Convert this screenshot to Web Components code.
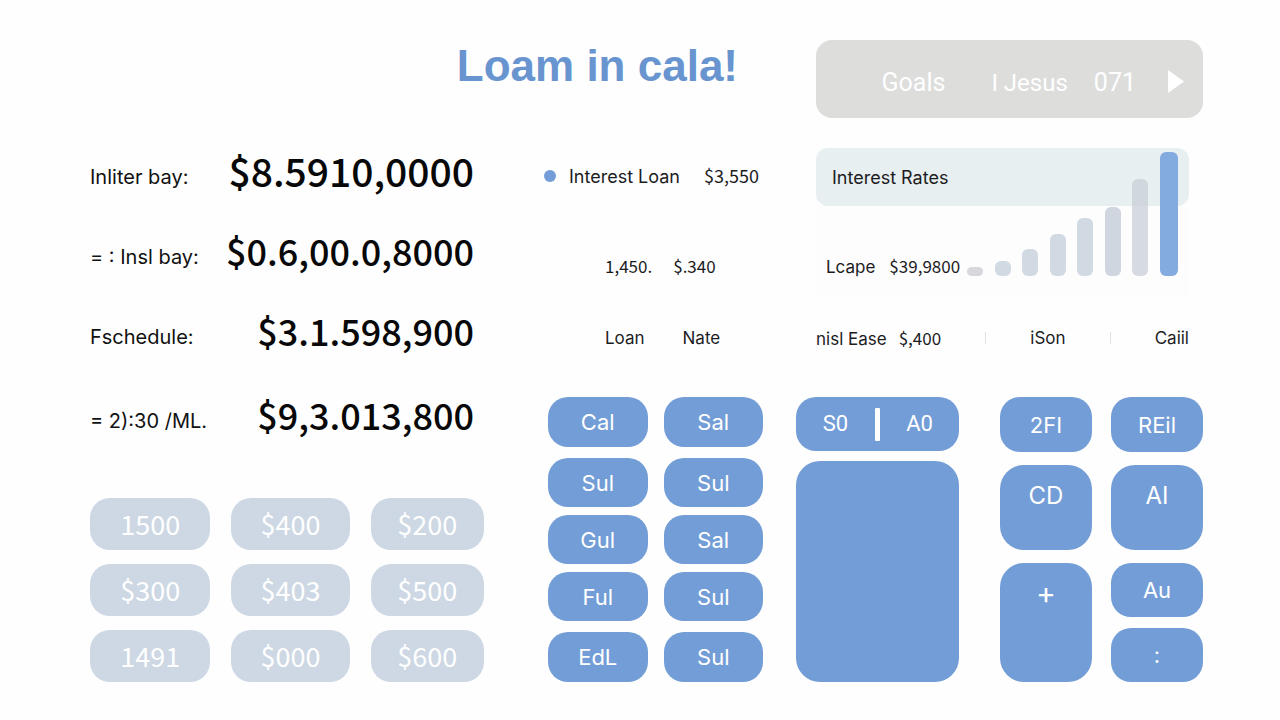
<!DOCTYPE html>
<html lang="en">
<head>
<meta charset="utf-8">
<meta name="viewport" content="width=device-width, initial-scale=1">
<title>Loam in cala!</title>
<style>
  body { margin: 0; background: #fefefe; }
</style>
</head>
<body>
<loan-app></loan-app>
<script>
const define = (name, html) => {
  const template = document.createElement('template');
  template.innerHTML = html;
  customElements.define(name, class extends HTMLElement {
    constructor() {
      super();
      this.attachShadow({ mode: 'open' }).append(template.content.cloneNode(true));
    }
  });
};

/* One labelled amount */
define('loan-figure', `
  <style>
    :host { display: flex; justify-content: space-between; align-items: flex-start; height: 80px; color: #111; white-space: nowrap; font-size: 20px; line-height: 64px; }
    .value { font: 500 36px/50px "Noto Sans CJK JP", sans-serif; color: #080808; }
    :host([large]) .value { font-size: 39px; }
  </style>
  <span class="label"><slot></slot></span>
  <span class="value"><slot name="value"></slot></span>`);

/* Calculator key */
define('calc-key', `
  <style>
    :host { display: block; }
    button {
      display: block; width: 100%; height: 100%; margin: 0; border: 0; border-radius: 20px;
      padding: 0; background: #739dd6; color: #fff; font: 22px/28px Inter, sans-serif; cursor: pointer;
    }
    :host([pale]) button { background: #cdd8e4; font: 27px/32px "Noto Sans CJK JP", sans-serif; }
    :host([tall]) button { border-radius: 24px; font-size: 24px; padding-bottom: 24px; }
    :host([plus]) button { border-radius: 24px; font-size: 30px; padding-bottom: 60px; }
  </style>
  <button type="button"><slot></slot></button>`);

/* Two-part key with a divider */
define('split-key', `
  <style>
    :host { display: grid; grid-template-columns: 1fr 5px 1fr; align-items: center; border-radius: 20px; background: #739dd6; }
    button { border: 0; padding: 0; background: none; color: #fff; font: 22px/28px Roboto, sans-serif; cursor: pointer; }
    i { height: 33px; background: #fff; border-radius: 1px; }
  </style>
  <button type="button"><slot name="first"></slot></button><i></i><button type="button"><slot name="second"></slot></button>`);

define('goal-bar', `
  <style>
    :host { display: block; flex: 0 1 387px; }
    nav { display: flex; align-items: center; justify-content: flex-end; box-sizing: border-box; height: 78px; padding: 8px 19px 0 0; border-radius: 16px; background: #dddddc; }
    button { border: 0; padding: 0; background: none; color: #fff; font: 25px/32px Roboto, sans-serif; white-space: nowrap; cursor: pointer; }
    .user { margin-left: 46px; font-size: 24px; }
    .count { margin-left: 26px; }
    .next { margin: 0 0 4px 32px; }
    svg { display: block; }
  </style>
  <nav aria-label="Goals">
    <button type="button">Goals</button>
    <button type="button" class="user">I Jesus</button>
    <button type="button" class="count">071</button>
    <button type="button" class="next" aria-label="Next"><svg width="16" height="23" viewBox="0 0 16 23"><path d="M0 0 16 11.5 0 23z" fill="#fff"/></svg></button>
  </nav>`);

define('bar-chart', `
  <style>
    :host { display: flex; align-items: flex-end; justify-content: space-between; width: 211px; height: 124px; }
    i { width: 16px; border-radius: 6px; background: #c5d0dccc; }
    i:nth-of-type(1) { height: 9px; background: #d8d8dc; }
    i:nth-of-type(2) { height: 15px; }
    i:nth-of-type(3) { height: 27px; }
    i:nth-of-type(4) { height: 42px; }
    i:nth-of-type(5) { height: 58px; }
    i:nth-of-type(6) { height: 69px; background: #d0d6df; }
    i:nth-of-type(7) { height: 97px; background: #cad2dacc; }
    i:nth-of-type(8) { height: 124px; width: 18px; background: #84abe0; }
  </style>
  <i></i><i></i><i></i><i></i><i></i><i></i><i></i><i></i>`);

define('rate-card', `
  <style>
    :host { display: grid; grid-template: 58px 92px / 1fr; background: #fdfdfd; white-space: nowrap; }
    h2 { grid-area: 1 / 1; margin: 0; padding-left: 16px; font: inherit; line-height: 60px; border-radius: 12px; background: #e7eff0; }
    p { grid-area: 2 / 1; display: flex; align-items: baseline; gap: 14px; margin: 0; padding: 48px 0 0 10px; font-size: 17px; }
    .amount { font-family: "Noto Sans CJK JP", sans-serif; }
    bar-chart { grid-area: 1 / 1 / 3 / 2; place-self: end; margin: 0 11px 22px 0; }
  </style>
  <h2>Interest Rates</h2>
  <p><span>Lcape</span><span class="amount">$39,9800</span></p>
  <bar-chart></bar-chart>`);

define('loan-summary', `
  <style>
    :host { display: grid; grid-template-columns: 268fr 373fr; grid-template-rows: 150px 80px; padding-right: 14px; font-size: 18px; line-height: 24px; color: #1c1c1e; white-space: nowrap; }
    p { display: flex; margin: 0; align-items: center; font-size: 17px; }
    .amount { font-family: "Noto Sans CJK JP", sans-serif; }
    .legend { height: 56px; margin-left: -4px; font-size: 18px; }
    .dot { width: 12px; height: 12px; margin-right: 13px; border-radius: 50%; background: #739dd6; }
    .pair { display: flex; align-items: baseline; gap: 12px; }
    .legend .pair { gap: 24px; }
    .sub { padding: 50px 0 0 57px; gap: 21px; }
    .heads { padding-left: 57px; gap: 38px; }
    .facts { justify-content: space-between; }
    .facts i { width: 1px; height: 12px; background: #e2e2e4; }
  </style>
  <div>
    <p class="legend"><i class="dot"></i><span class="pair"><span>Interest Loan</span><span class="amount">$3,550</span></span></p>
    <p class="sub"><span class="amount">1,450.</span><span class="amount">$.340</span></p>
  </div>
  <rate-card></rate-card>
  <p class="heads"><span>Loan</span><span>Nate</span></p>
  <p class="facts"><span class="pair"><span>nisl Ease</span><span class="amount">$,400</span></span><i></i><span>iSon</span><i></i><span>Caiil</span></p>`);

define('amount-pad', `
  <style>
    :host { display: grid; grid-template-columns: 120fr 118fr 113fr; grid-auto-rows: 52px; gap: 14px 21px; }
  </style>
  <calc-key pale>1500</calc-key><calc-key pale>$400</calc-key><calc-key pale>$200</calc-key>
  <calc-key pale>$300</calc-key><calc-key pale>$403</calc-key><calc-key pale>$500</calc-key>
  <calc-key pale>1491</calc-key><calc-key pale>$000</calc-key><calc-key pale>$600</calc-key>`);

define('function-pad', `
  <style>
    :host { display: flex; }
    .names { flex: 215; display: flex; flex-direction: column; gap: 11px; }
    .pair { display: grid; grid-template-columns: 1fr 1fr; grid-auto-rows: 49px; gap: 8px 16px; }
    .edge { grid-auto-rows: 50px; }
    .centre { flex: 163; display: grid; grid-template-rows: 54px 1fr; gap: 10px; margin: 0 41px 0 33px; }
    .ops { flex: 203; display: grid; grid-template-columns: 1fr 1fr; gap: 19px; }
    .stack { display: grid; gap: 13px; grid-template-rows: 55px 85px 1fr; }
    .last { display: grid; grid-template-rows: 1fr 1fr; gap: 11px; }
  </style>
  <div class="names">
    <div class="pair edge"><calc-key>Cal</calc-key><calc-key>Sal</calc-key></div>
    <div class="pair">
      <calc-key>Sul</calc-key><calc-key>Sul</calc-key>
      <calc-key>Gul</calc-key><calc-key>Sal</calc-key>
      <calc-key>Ful</calc-key><calc-key>Sul</calc-key>
    </div>
    <div class="pair edge"><calc-key>EdL</calc-key><calc-key>Sul</calc-key></div>
  </div>
  <div class="centre">
    <split-key><span slot="first">S0</span><span slot="second">A0</span></split-key>
    <calc-key plus></calc-key>
  </div>
  <div class="ops">
    <div class="stack"><calc-key>2FI</calc-key><calc-key tall>CD</calc-key><calc-key plus>+</calc-key></div>
    <div class="stack"><calc-key>REil</calc-key><calc-key tall>AI</calc-key>
      <div class="last"><calc-key>Au</calc-key><calc-key>:</calc-key></div>
    </div>
  </div>`);

define('loan-app', `
  <style>
    :host { display: block; padding: 40px 77px 37px 90px; font-family: Inter, sans-serif; }
    header { display: flex; justify-content: flex-end; gap: 78px; margin-bottom: 30px; }
    h1 { margin: 0; font: bold 44px/52px "Liberation Sans", sans-serif; color: #6894d0; white-space: nowrap; }
    main { display: grid; grid-template-columns: 394fr 655fr; column-gap: 64px; }
    section { display: flex; flex-direction: column; justify-content: space-between; gap: 19px; }
    .figures { display: grid; grid-template-rows: 80px 80px 84px 80px; margin-top: -3px; padding-right: 10px; }
  </style>
  <header><h1>Loam in cala!</h1><goal-bar></goal-bar></header>
  <main>
    <section>
      <div class="figures">
        <loan-figure large>Inliter bay:<span slot="value">$8.5910,0000</span></loan-figure>
        <loan-figure>= : Insl bay:<span slot="value">$0.6,00.0,8000</span></loan-figure>
        <loan-figure>Fschedule:<span slot="value">$3.1.598,900</span></loan-figure>
        <loan-figure>= 2):30 /ML.<span slot="value">$9,3.013,800</span></loan-figure>
      </div>
      <amount-pad></amount-pad>
    </section>
    <section>
      <loan-summary></loan-summary>
      <function-pad></function-pad>
    </section>
  </main>`);
</script>
</body>
</html>
